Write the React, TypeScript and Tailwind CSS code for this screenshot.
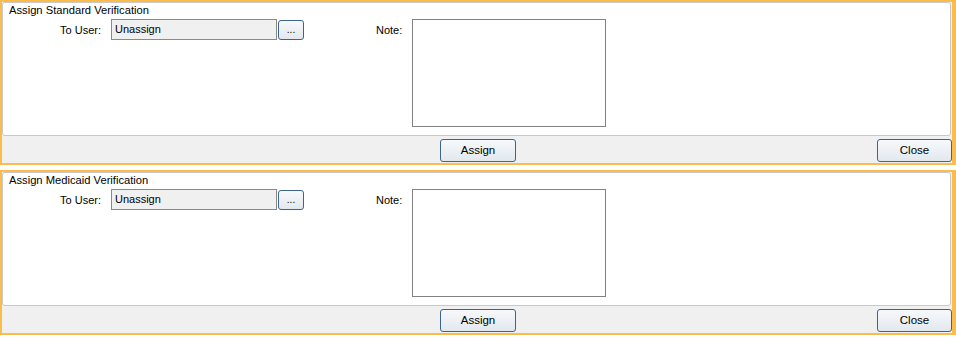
import React from 'react'

const font = { fontFamily: '"Liberation Sans", Arial, sans-serif' }

function WinButton({ label, className }: { label: string; className: string }) {
  return (
    <button
      className={`h-[23px] rounded-[3px] border border-[#3c648f] bg-gradient-to-b from-[#f7f9fb] to-[#e2e8ee] text-[11.5px] text-black leading-none ${className}`}
    >
      {label}
    </button>
  )
}

function AssignPanel({ title }: { title: string }) {
  return (
    <section className="h-[165px] w-[956px] border-t-2 border-b-2 border-l-2 border-r-4 border-[#fcbc4b] bg-[#f0f0f0] flex flex-col">
      <div className="h-[134px] mr-[1px] rounded-[3px] border border-[#c9c9c9] bg-white pl-[6px]">
        <div className="h-[15px] pt-[1px] text-[11.2px] leading-[13px] text-black">{title}</div>
        <div className="flex items-start mt-[1px] -ml-[6px]">
          <div className="w-[98px] pt-[5px] text-right text-[11px] leading-[13px] text-black">To User:</div>
          <div className="ml-[10px] h-[21px] w-[166px] border border-[#8a8a8a] bg-[#f0f0f0] pl-[3px] pt-[3px] text-[11px] leading-[13px] text-black">
            Unassign
          </div>
          <button className="ml-[1px] mt-[1px] h-[20px] w-[26px] rounded-[3px] border border-[#3c648f] bg-gradient-to-b from-[#f7f9fb] to-[#e2e8ee] text-[10px] leading-none text-black">
            ...
          </button>
          <div className="ml-[72px] w-[26px] pt-[5px] text-[11px] leading-[13px] text-black">Note:</div>
          <div className="ml-[10px] h-[108px] w-[194px] border border-[#828282] bg-white" />
        </div>
      </div>
      <div className="flex flex-1 items-start pt-[3px]">
        <WinButton label="Assign" className="ml-[438px] w-[76px]" />
        <div className="flex-1" />
        <WinButton label="Close" className="w-[75px]" />
      </div>
    </section>
  )
}

export default function App() {
  return (
    <div className="h-[338px] w-[956px] bg-white overflow-hidden" style={font}>
      <AssignPanel title="Assign Standard Verification" />
      <div className="h-[5px]" />
      <AssignPanel title="Assign Medicaid Verification" />
    </div>
  )
}
